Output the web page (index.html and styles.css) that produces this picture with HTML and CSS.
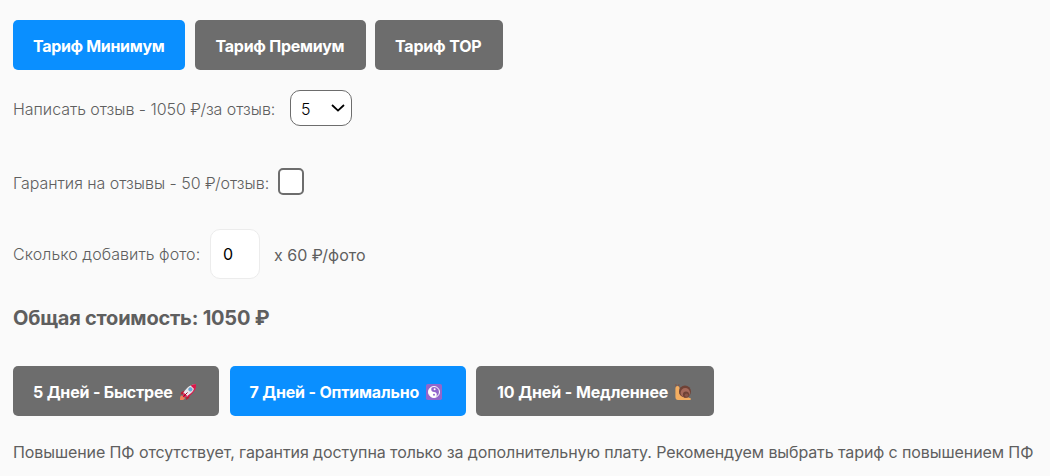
FILE: index.html
```html
<!DOCTYPE html>
<html lang="ru">
<head>
	<meta charset="utf-8">
	<meta name="viewport" content="width=device-width">
	<title>Калькулятор отзывов</title>
	<link rel="stylesheet" href="styles.css">
</head>
<body>
	<form class="calc">
		<div class="buttons tariffs">
			<button type="button" class="btn active tariff-min"><span>Тариф Минимум</span></button>
			<button type="button" class="btn tariff-premium"><span>Тариф Премиум</span></button>
			<button type="button" class="btn tariff-top"><span>Тариф TOP</span></button>
		</div>
		<div class="row row-reviews">
			<label class="label-reviews" for="reviews">Написать отзыв - 1050 ₽/за отзыв:</label>
			<div class="select" id="reviews" tabindex="0">
				<span>5</span>
				<svg width="14" height="8" viewBox="0 0 14 8"><path d="M1 1l6 5.6L13 1" fill="none" stroke="#000" stroke-width="1.8"/></svg>
			</div>
		</div>
		<div class="row row-guarantee">
			<label class="label-guarantee" for="guarantee">Гарантия на отзывы - 50 ₽/отзыв:</label>
			<input type="checkbox" id="guarantee">
		</div>
		<div class="row row-photo">
			<label class="label-photo" for="photo">Сколько добавить фото:</label>
			<input type="text" id="photo" value="0">
			<span class="photo-price">x 60 ₽/фото</span>
		</div>
		<h3 class="total">Общая стоимость: 1050 ₽</h3>
		<div class="buttons days">
			<button type="button" class="btn days-5">
				<span>5 Дней - Быстрее</span>
				<svg class="emoji" viewBox="0 0 16 16">
					<path d="M6 6L1.5 8 .5 10.5 5 10zM10 10l-1 4-3 2 .5-5z" fill="#be1931"/>
					<path d="M1 11.5l3 .5.8 2.8L3 16H0l.2-3z" fill="#f4805a"/>
					<path d="M15.8.2C11 .2 7 3 3.5 8.5l-.4 3 1.5 1.6 3-.5C13 9 15.8 5 15.8.2z" fill="#e8e9ee"/>
					<path d="M15.8.2c-2 0-3.6.4-5.2 1.2l4 4C15.4 3.8 15.8 2 15.8.2zM3.5 8.5l-.7 4.7 5-.7z" fill="#d9174a"/>
					<path d="M15.8.2C15.8 5 13 9 7.6 12.6" fill="none" stroke="#d9174a" stroke-width="1.2"/>
					<path d="M7.5 8.5l-4 4" stroke="#a0041e" stroke-width="1"/>
					<circle cx="10.4" cy="5.4" r="1.8" fill="#55acee" stroke="#8899a6" stroke-width=".7"/>
				</svg>
			</button>
			<button type="button" class="btn active days-7">
				<span>7 Дней - Оптимально</span>
				<svg class="emoji" viewBox="0 0 16 16">
					<rect width="16" height="16" rx="1.8" fill="#9266cc"/>
					<circle cx="8" cy="8" r="5.5" fill="#9266cc" stroke="#fff" stroke-width="1"/>
					<path d="M8 2.5a5.5 5.5 0 0 0 0 11 2.75 2.75 0 0 0 0-5.5 2.75 2.75 0 0 1 0-5.5z" fill="#fff"/>
					<circle cx="8.6" cy="5.3" r="1" fill="#fff"/>
					<circle cx="8" cy="10.7" r="1" fill="#9266cc"/>
				</svg>
			</button>
			<button type="button" class="btn days-10">
				<span>10 Дней - Медленнее</span>
				<svg class="emoji" viewBox="0 0 16 16">
					<path d="M.8.2L1.6 4M4 .2L3.4 4" stroke="#8a4b38" stroke-width=".8"/>
					<path d="M.4 4.5C.4 2.8 1.4 2 2.5 2s2 .8 2 2.2V10L15.5 14.2c.8.7.2 1.8-.8 1.8H3C1 16 .4 14.5.4 12.5z" fill="#f4ae61"/>
					<circle cx="10" cy="7.6" r="6" fill="#704236"/>
					<circle cx="10.3" cy="8.7" r="4.7" fill="#a5695a"/>
					<circle cx="11" cy="10.7" r="3.1" fill="#704236"/>
					<circle cx="11.5" cy="11.2" r="1.7" fill="#8b5548"/>
				</svg>
			</button>
		</div>
		<p class="note">Повышение ПФ отсутствует, гарантия доступна только за дополнительную плату. Рекомендуем выбрать тариф с повышением ПФ</p>
	</form>
</body>
</html>
```
FILE: styles.css
```css
* {
	box-sizing: border-box;
}

body {
	margin: 0;
	background-color: #fafafa;
	color: #5f5f5f;
	font-family: Inter, "Noto Sans", sans-serif;
	font-size: 16px;
	line-height: 24px;
	overflow: hidden;
}

.calc {
	padding: 20px 0 0 13px;
}

.buttons {
	display: flex;
	gap: 10px;
}

.btn {
	display: flex;
	align-items: center;
	height: 50px;
	margin: 0;
	padding: 2px 0 0 20px;
	border: none;
	border-radius: 5px;
	background-color: #6d6d6d;
	color: #fff;
	font: bold 16px Inter, "Noto Sans", sans-serif;
	letter-spacing: -0.18px;
	white-space: nowrap;
}

.btn.active {
	background-color: #0a8fff;
}

.tariff-min {
	width: 172px;
	letter-spacing: -0.33px;
}

.tariff-premium {
	width: 171px;
	padding-left: 21px;
	letter-spacing: -0.25px;
}

.tariff-top {
	width: 128px;
}

.tariffs {
	gap: 10px 9.5px;
}

.days {
	gap: 10.5px;
}

.days-5 {
	width: 206px;
}

.days-7 {
	width: 236px;
}

.days-10 {
	width: 238px;
	padding-left: 21px;
	letter-spacing: -0.1px;
}

.emoji {
	width: 16px;
	height: 16px;
	margin-left: 7px;
	flex: none;
}

.row {
	display: flex;
	align-items: center;
	white-space: nowrap;
	font-weight: 300;
}

.row-reviews {
	height: 36px;
	margin-top: 20px;
}

.label-reviews {
	width: 277px;
	padding-top: 2px;
	letter-spacing: -0.04px;
}

.select {
	display: flex;
	align-items: center;
	justify-content: space-between;
	width: 62px;
	height: 36px;
	padding: 2px 6px 0 10px;
	border: 1px solid #6d6d6d;
	border-radius: 10px;
	background-color: #fff;
	color: #000;
}

.select svg {
	margin-bottom: 2px;
}

.row-guarantee {
	height: 28px;
	margin-top: 42px;
}

.label-guarantee {
	width: 265px;
	padding-top: 2px;
	letter-spacing: -0.03px;
}

#guarantee {
	appearance: none;
	width: 26px;
	height: 27px;
	margin: 0 0 1px;
	border: 2px solid #6d6d6d;
	border-radius: 5px;
	background-color: #fff;
}

.row-photo {
	height: 50px;
	margin-top: 33px;
}

.label-photo {
	width: 197px;
	letter-spacing: 0.06px;
}

#photo {
	width: 50px;
	height: 50px;
	padding: 0 0 0 12px;
	border: 1px solid #ececec;
	border-radius: 10px;
	background-color: #fff;
	color: #000;
	font: 16px Inter, "Noto Sans", sans-serif;
}

.photo-price {
	margin-left: 14px;
	padding-top: 2px;
	font-weight: 400;
}

.total {
	margin: 24px 0 33px;
	font-size: 20px;
	line-height: 30px;
	font-weight: 700;
	letter-spacing: -0.22px;
}

.note {
	margin: 24px 0 0;
	letter-spacing: -0.098px;
	white-space: nowrap;
}
```
